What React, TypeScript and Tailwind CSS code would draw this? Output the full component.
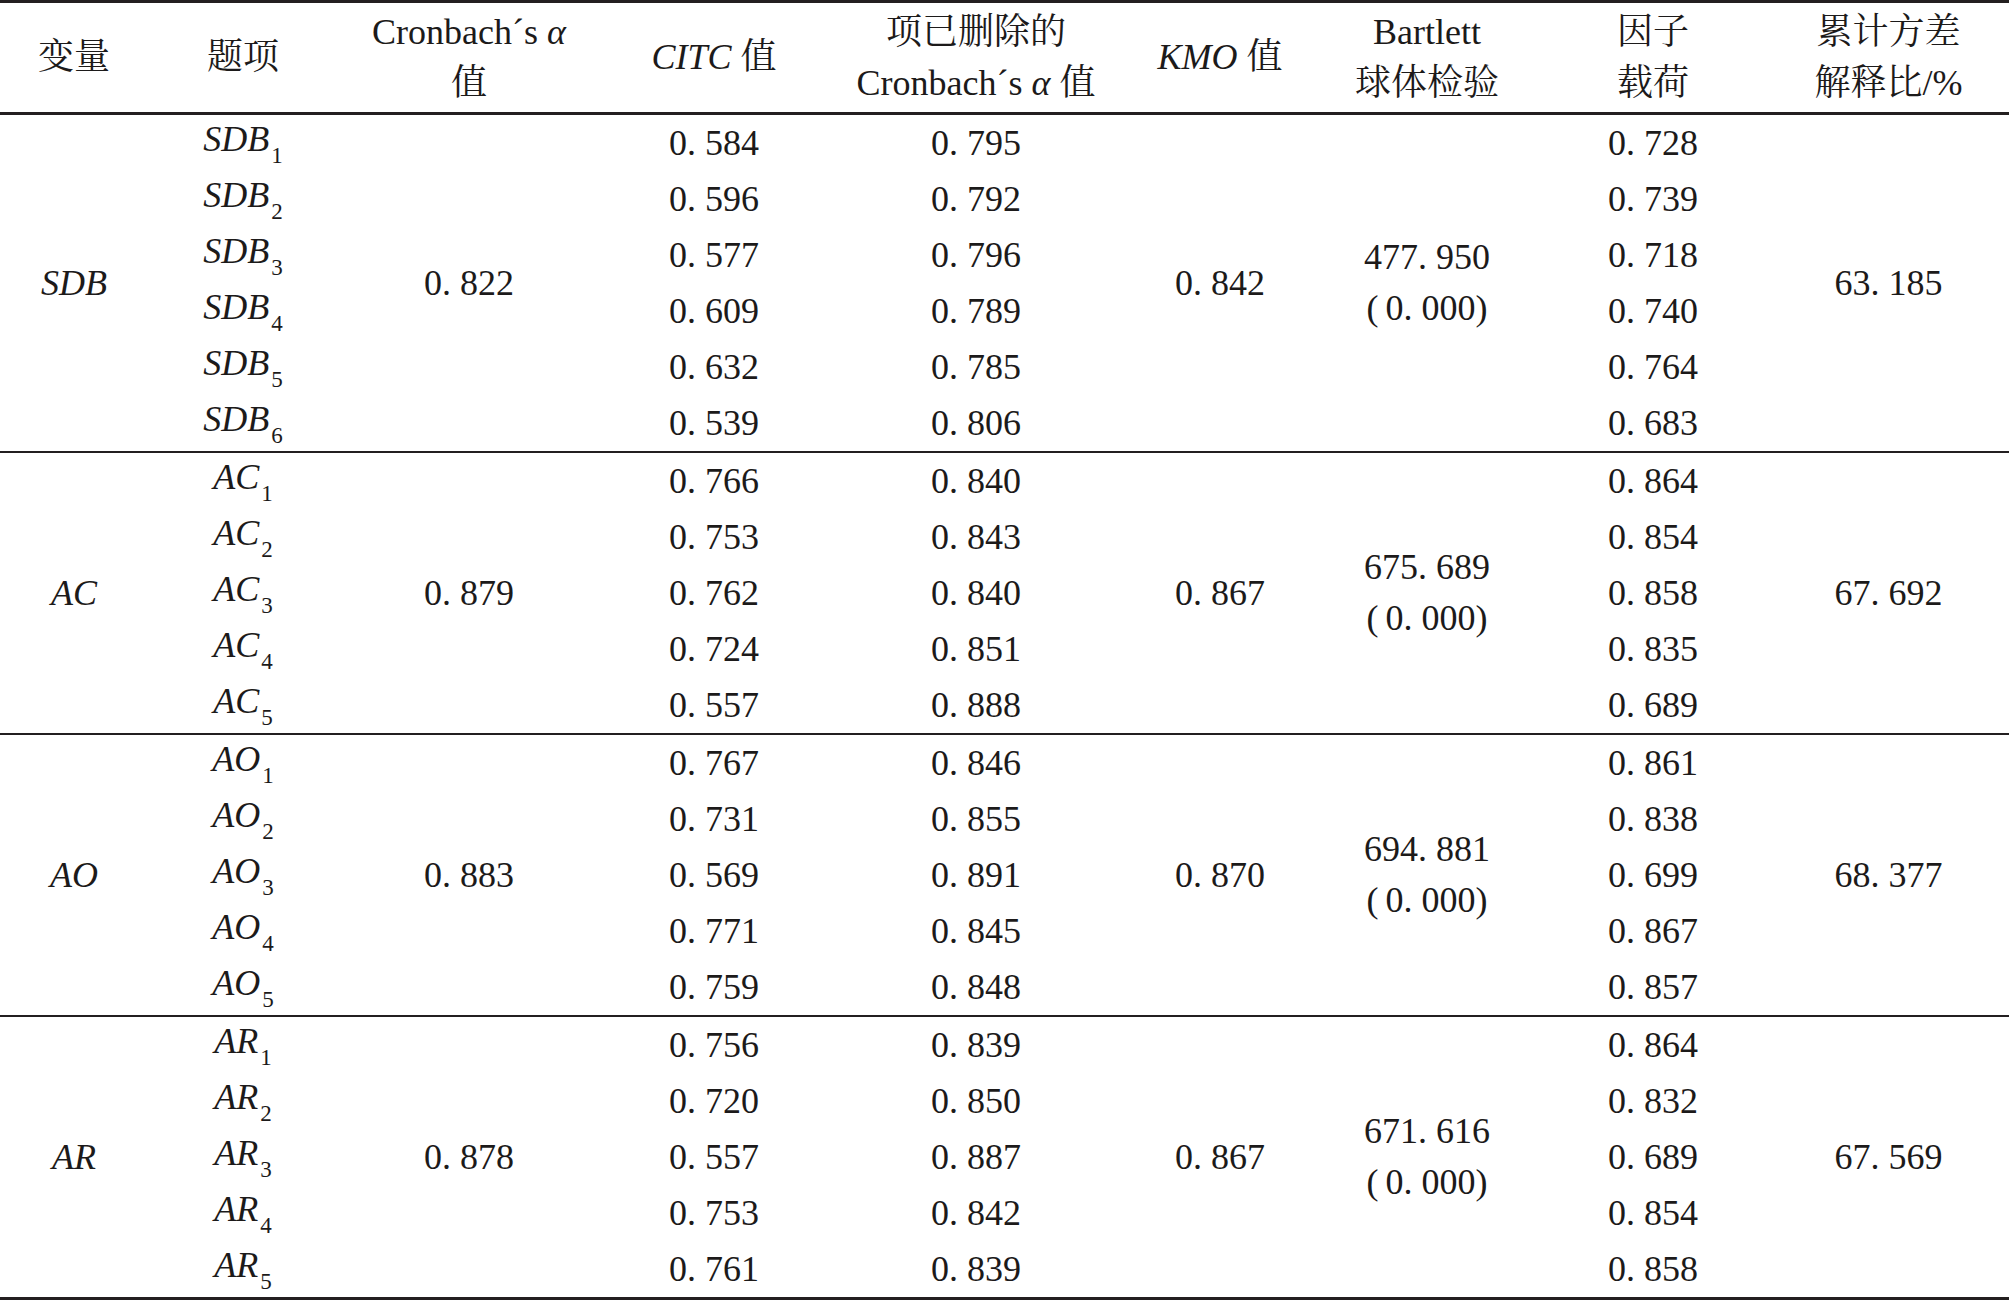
import React from "react";

type Group = {
  name: string;
  items: number;
  alpha: string;
  citc: string[];
  del: string[];
  kmo: string;
  bart: string;
  load: string[];
  varr: string;
  border: string;
};

const groups: Group[] = [
  {
    name: "SDB",
    items: 6,
    alpha: "0.822",
    citc: ["0.584", "0.596", "0.577", "0.609", "0.632", "0.539"],
    del: ["0.795", "0.792", "0.796", "0.789", "0.785", "0.806"],
    kmo: "0.842",
    bart: "477.950",
    load: ["0.728", "0.739", "0.718", "0.740", "0.764", "0.683"],
    varr: "63.185",
    border: "border-b-[2px]",
  },
  {
    name: "AC",
    items: 5,
    alpha: "0.879",
    citc: ["0.766", "0.753", "0.762", "0.724", "0.557"],
    del: ["0.840", "0.843", "0.840", "0.851", "0.888"],
    kmo: "0.867",
    bart: "675.689",
    load: ["0.864", "0.854", "0.858", "0.835", "0.689"],
    varr: "67.692",
    border: "border-b-[2px]",
  },
  {
    name: "AO",
    items: 5,
    alpha: "0.883",
    citc: ["0.767", "0.731", "0.569", "0.771", "0.759"],
    del: ["0.846", "0.855", "0.891", "0.845", "0.848"],
    kmo: "0.870",
    bart: "694.881",
    load: ["0.861", "0.838", "0.699", "0.867", "0.857"],
    varr: "68.377",
    border: "border-b-[2px]",
  },
  {
    name: "AR",
    items: 5,
    alpha: "0.878",
    citc: ["0.756", "0.720", "0.557", "0.753", "0.761"],
    del: ["0.839", "0.850", "0.887", "0.842", "0.839"],
    kmo: "0.867",
    bart: "671.616",
    load: ["0.864", "0.832", "0.689", "0.854", "0.858"],
    varr: "67.569",
    border: "border-b-[3px]",
  },
];

const f = (s: string) => s.replace(".", ". ");

const W = [
  "w-[148px]",
  "w-[190px]",
  "w-[262px]",
  "w-[228px]",
  "w-[296px]",
  "w-[192px]",
  "w-[222px]",
  "w-[230px]",
  "flex-1",
];

function Merged({ w, children }: { w: string; children: React.ReactNode }) {
  return (
    <div className={`${w} shrink-0 flex flex-col items-center justify-center text-center leading-[51px]`}>
      {children}
    </div>
  );
}

function Col({ w, values }: { w: string; values: React.ReactNode[] }) {
  return (
    <div className={`${w} shrink-0 flex flex-col`}>
      {values.map((v, i) => (
        <div key={i} className="h-[56px] flex items-center justify-center whitespace-pre">
          {v}
        </div>
      ))}
    </div>
  );
}

function Item({ name, n }: { name: string; n: number }) {
  return (
    <span className="italic whitespace-nowrap relative -top-[4px]">
      {name}
      <span className="not-italic text-[23px] relative top-[12px] ml-[2px]">{n}</span>
    </span>
  );
}

export default function App() {
  return (
    <div className="w-[2009px] h-[1300px] bg-white text-[#1c1a1a] text-[36px] font-['Liberation_Serif','Noto_Serif_CJK_SC','Noto_Sans_CJK_SC',serif] overflow-hidden">
      <div className="flex h-[115px] border-t-[3px] border-b-[3px] border-[#231f20] leading-[51px]">
        <Merged w={W[0]}>变量</Merged>
        <Merged w={W[1]}>题项</Merged>
        <Merged w={W[2]}>
          <div className="whitespace-pre">
            Cronbach´s <span className="italic">α</span>
          </div>
          <div>值</div>
        </Merged>
        <Merged w={W[3]}>
          <div className="whitespace-pre">
            <span className="italic">CITC</span> 值
          </div>
        </Merged>
        <Merged w={W[4]}>
          <div>项已删除的</div>
          <div className="whitespace-pre">
            Cronbach´s <span className="italic">α</span> 值
          </div>
        </Merged>
        <Merged w={W[5]}>
          <div className="whitespace-pre">
            <span className="italic">KMO</span> 值
          </div>
        </Merged>
        <Merged w={W[6]}>
          <div>Bartlett</div>
          <div>球体检验</div>
        </Merged>
        <Merged w={W[7]}>
          <div>因子</div>
          <div>载荷</div>
        </Merged>
        <Merged w={W[8]}>
          <div>累计方差</div>
          <div>解释比/%</div>
        </Merged>
      </div>
      {groups.map((g) => (
        <div key={g.name} className={`flex ${g.border} border-[#231f20]`}>
          <Merged w={W[0]}>
            <span className="italic">{g.name}</span>
          </Merged>
          <Col
            w={W[1]}
            values={Array.from({ length: g.items }, (_, i) => (
              <Item name={g.name} n={i + 1} />
            ))}
          />
          <Merged w={W[2]}>
            <span className="whitespace-pre">{f(g.alpha)}</span>
          </Merged>
          <Col w={W[3]} values={g.citc.map(f)} />
          <Col w={W[4]} values={g.del.map(f)} />
          <Merged w={W[5]}>
            <span className="whitespace-pre">{f(g.kmo)}</span>
          </Merged>
          <Merged w={W[6]}>
            <div className="whitespace-pre">{f(g.bart)}</div>
            <div className="whitespace-pre">{"(\u2009" + "0. 000)"}</div>
          </Merged>
          <Col w={W[7]} values={g.load.map(f)} />
          <Merged w={W[8]}>
            <span className="whitespace-pre">{f(g.varr)}</span>
          </Merged>
        </div>
      ))}
    </div>
  );
}
